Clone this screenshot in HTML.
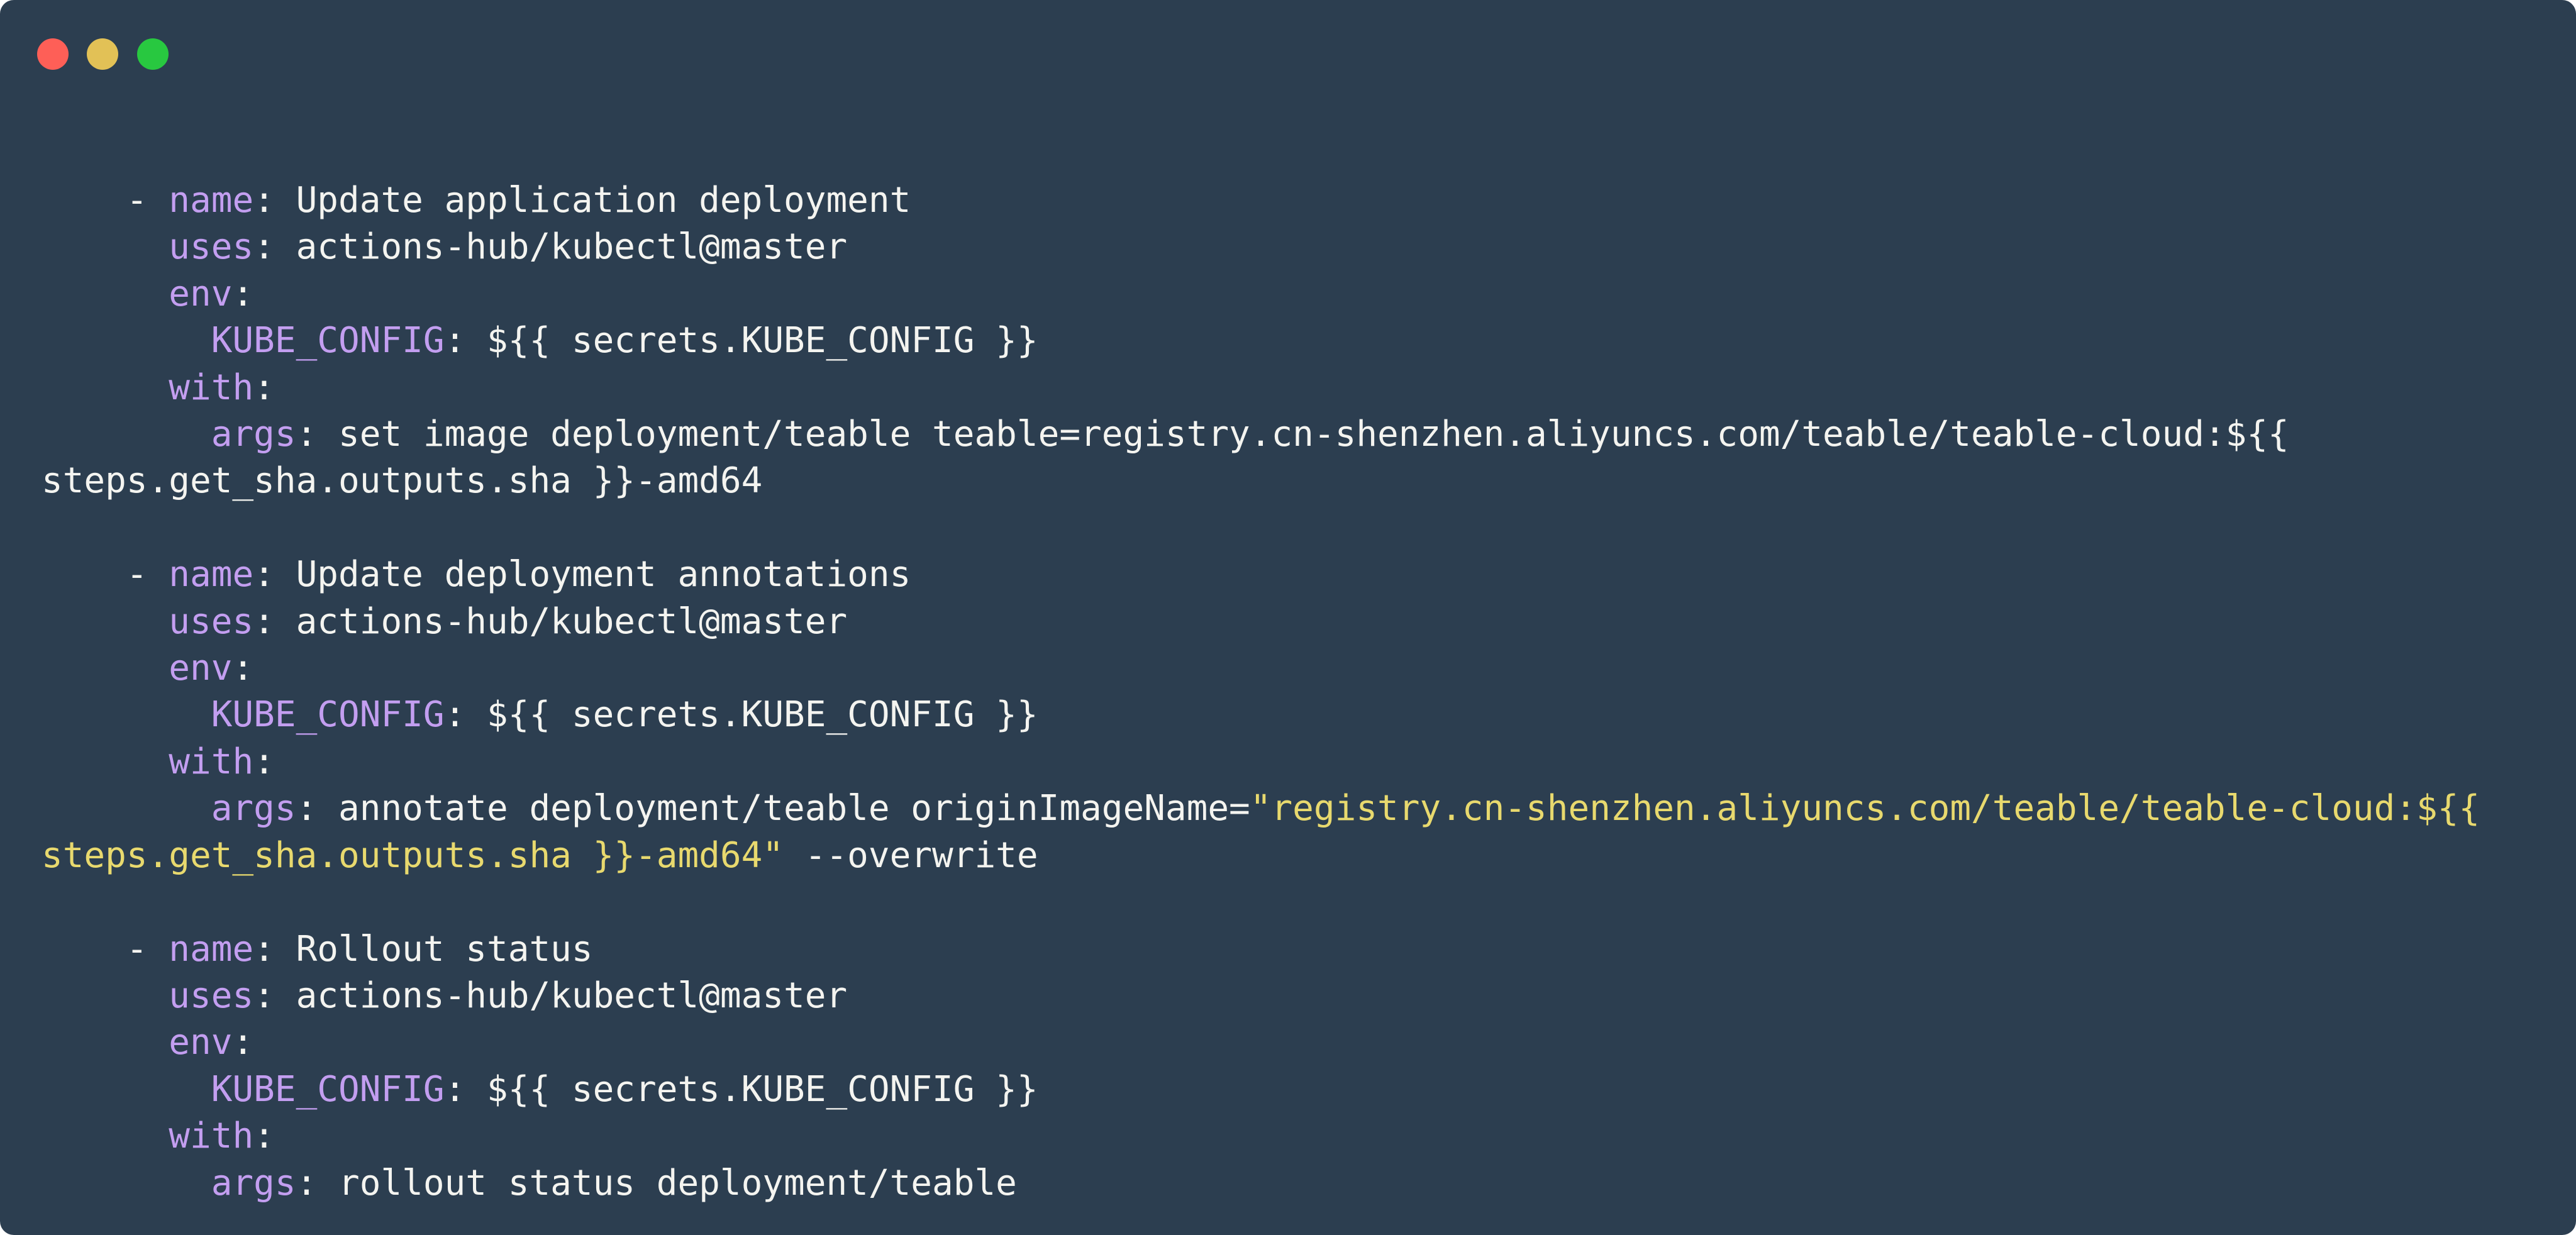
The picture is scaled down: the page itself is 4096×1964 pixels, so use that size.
<!DOCTYPE html>
<html><head><meta charset="utf-8"><style>
html,body{margin:0;padding:0;background:#fff;width:4096px;height:1964px;overflow:hidden}
.win{position:absolute;left:0;top:0;width:4096px;height:1964px;background:#2c3e50;border-radius:22px}
.d{position:absolute;top:61px;width:50px;height:50px;border-radius:50%}
pre{position:absolute;left:66px;top:282px;margin:0;font-family:"DejaVu Sans Mono","Liberation Mono",monospace;font-size:56px;line-height:74.4px;color:#f4f4f0}
.k{color:#c39ef0}.s{color:#e8d96e}
</style></head><body><div class="win">
<div class="d" style="left:59px;background:#fe5f57"></div>
<div class="d" style="left:138px;background:#e2c156"></div>
<div class="d" style="left:218px;background:#28c840"></div>
<pre>    - <span class="k">name</span>: Update application deployment
      <span class="k">uses</span>: actions-hub/kubectl@master
      <span class="k">env</span>:
        <span class="k">KUBE_CONFIG</span>: ${{ secrets.KUBE_CONFIG }}
      <span class="k">with</span>:
        <span class="k">args</span>: set image deployment/teable teable=registry.cn-shenzhen.aliyuncs.com/teable/teable-cloud:${{
steps.get_sha.outputs.sha }}-amd64

    - <span class="k">name</span>: Update deployment annotations
      <span class="k">uses</span>: actions-hub/kubectl@master
      <span class="k">env</span>:
        <span class="k">KUBE_CONFIG</span>: ${{ secrets.KUBE_CONFIG }}
      <span class="k">with</span>:
        <span class="k">args</span>: annotate deployment/teable originImageName=<span class="s">"registry.cn-shenzhen.aliyuncs.com/teable/teable-cloud:${{
steps.get_sha.outputs.sha }}-amd64"</span> --overwrite

    - <span class="k">name</span>: Rollout status
      <span class="k">uses</span>: actions-hub/kubectl@master
      <span class="k">env</span>:
        <span class="k">KUBE_CONFIG</span>: ${{ secrets.KUBE_CONFIG }}
      <span class="k">with</span>:
        <span class="k">args</span>: rollout status deployment/teable</pre>
</div></body></html>
